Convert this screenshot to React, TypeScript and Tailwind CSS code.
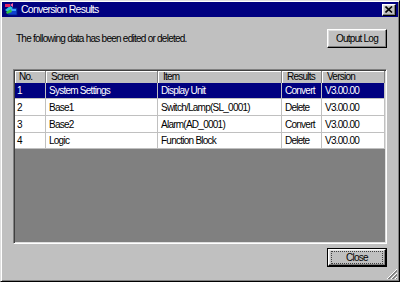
import React from "react";

interface Row {
  no: string;
  screen: string;
  item: string;
  result: string;
  version: string;
  h: string;
}

const ROWS: Row[] = [
  { no: "1", screen: "System Settings", item: "Display Unit", result: "Convert", version: "V3.00.00", h: "h-[16px]" },
  { no: "2", screen: "Base1", item: "Switch/Lamp(SL_0001)", result: "Delete", version: "V3.00.00", h: "h-[17px]" },
  { no: "3", screen: "Base2", item: "Alarm(AD_0001)", result: "Convert", version: "V3.00.00", h: "h-[17px]" },
  { no: "4", screen: "Logic", item: "Function Block", result: "Delete", version: "V3.00.00", h: "h-[16px]" },
];

const COLS = ["w-[31px]", "w-[112px]", "w-[124px]", "w-[40px]", "w-[63px]"];
const HEADERS = ["No.", "Screen", "Item", "Results", "Version"];

const btn =
  "bg-[#c0c0c0] border border-t-white border-l-white border-r-black border-b-black shadow-[inset_-1px_-1px_0_#808080,inset_1px_1px_0_#dfdfdf] flex items-center justify-center text-black";

function AppIcon(): React.ReactElement {
  return (
    <svg width="14" height="13" viewBox="0 0 14 13" className="shrink-0">
      <rect x="4" y="5" width="9" height="7" fill="#1040d0" stroke="#002080" strokeWidth="0.8" />
      <rect x="5" y="6" width="7" height="2" fill="#40a0ff" />
      <path d="M1 7 L6 3 L9 5 L4 9 Z" fill="#30c0e0" />
      <path d="M1 1 H6 V4 H1 Z" fill="#e02060" />
      <path d="M6 2 L9 0 V4 Z" fill="#ff60a0" />
      <path d="M2 9 L7 6 L8 9 L3 11 Z" fill="#30c040" />
    </svg>
  );
}

export default function App(): React.ReactElement {
  return (
    <div
      className="relative w-[400px] h-[282px] bg-[#c0c0c0] border border-t-[#dfdfdf] border-l-[#dfdfdf] border-r-black border-b-black shadow-[inset_1px_1px_0_#fff,inset_-1px_-1px_0_#808080] p-px flex flex-col text-[10px] tracking-[-0.75px] text-black"
      style={{ fontFamily: '"Liberation Sans", Arial, sans-serif' }}
    >
      {/* Title bar */}
      <div className="h-[15px] bg-[#000080] flex items-center pl-[2px] pr-[2px] gap-[3px]">
        <AppIcon />
        <span className="text-white text-[10.5px] leading-[15px] flex-1">Conversion Results</span>
        <div className={`${btn} w-[14px] h-[12px]`}>
          <svg width="8" height="7" viewBox="0 0 8 7">
            <path d="M0.5 0.5 L7 6.5 M7 0.5 L0.5 6.5" stroke="#000" strokeWidth="1.6" />
          </svg>
        </div>
      </div>

      {/* Message + Output Log */}
      <div className="mt-[12px] flex items-center justify-between pl-[14px] pr-[11px]">
        <span className="leading-[12px]">The following data has been edited or deleted.</span>
        <div className={`${btn} w-[60px] h-[19px]`}>Output Log</div>
      </div>

      {/* List view */}
      <div className="mt-[21px] ml-[11px] w-[374px] h-[175px] border border-t-[#808080] border-l-[#808080] border-r-white border-b-white shadow-[inset_1px_1px_0_#404040,inset_-1px_-1px_0_#dfdfdf] p-px flex flex-col">
        <div className="flex-1 bg-[#808080] flex flex-col">
          {/* Header */}
          <div className="flex h-[12px]">
            {HEADERS.map((h, i) => (
              <div
                key={h}
                className={`${COLS[i]} h-full bg-[#c0c0c0] border-r border-r-[#808080] shadow-[inset_1px_1px_0_#fff] ${i === 0 ? "pl-[4px]" : "pl-[5px]"} leading-[12px] overflow-hidden whitespace-nowrap`}
              >
                {h}
              </div>
            ))}
          </div>
          {/* Rows */}
          {ROWS.map((r, ri) => {
            const sel = ri === 0;
            const cells = [r.no, r.screen, r.item, r.result, r.version];
            return (
              <div
                key={r.no}
                className={`flex ${r.h} border-b border-b-[#c0c0c0] ${sel ? "bg-[#000080] text-white" : "bg-white text-black"}`}
              >
                {cells.map((c, i) => (
                  <div
                    key={i}
                    className={`${COLS[i]} h-full border-r border-r-[#c0c0c0] flex items-center ${i === 0 ? "pl-[2px]" : "pl-[3px]"} whitespace-nowrap overflow-hidden`}
                  >
                    {c}
                  </div>
                ))}
              </div>
            );
          })}
        </div>
      </div>

      {/* Close */}
      <div className="mt-[4px] flex justify-end pr-[11px]">
        <div className="w-[60px] h-[19px] border border-black flex">
          <div className={`${btn} flex-1`}>
            <div className="border border-dotted border-[#404040] w-[52px] h-[13px] flex items-center justify-center leading-[11px]">
              Close
            </div>
          </div>
        </div>
      </div>

      {/* Size grip */}
      <svg width="12" height="12" viewBox="0 0 12 12" className="absolute right-[1px] bottom-[1px]">
        <path d="M11 1 L1 11 M11 5 L5 11 M11 9 L9 11" stroke="#fff" strokeWidth="1" />
        <path d="M11 2 L2 11 M11 3 L3 11 M11 6 L6 11 M11 7 L7 11 M11 10 L10 11" stroke="#808080" strokeWidth="1" />
      </svg>
    </div>
  );
}
